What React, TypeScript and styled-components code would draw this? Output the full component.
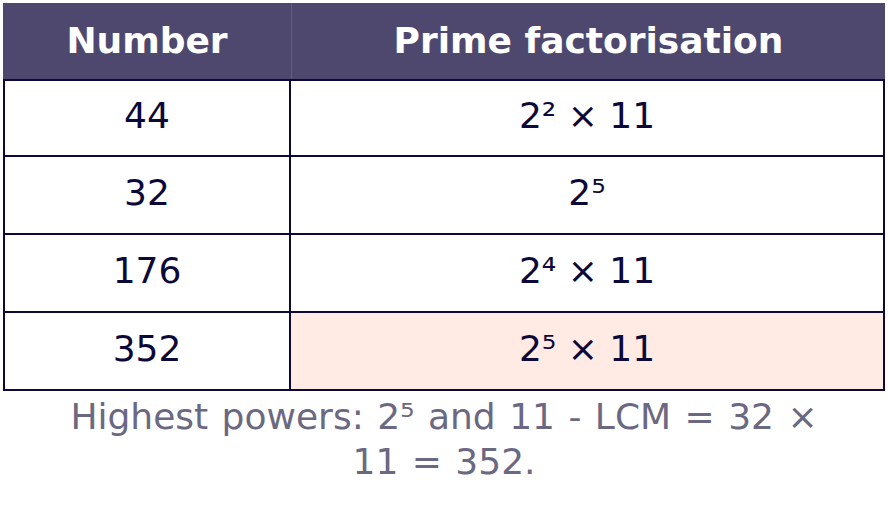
import { createGlobalStyle } from 'styled-components';
import styled from 'styled-components';

const rows = [
  { number: '44', factors: '2² × 11' },
  { number: '32', factors: '2⁵' },
  { number: '176', factors: '2⁴ × 11' },
  { number: '352', factors: '2⁵ × 11', highlight: true },
];

const GlobalStyle = createGlobalStyle`
  html, body {
    margin: 0;
    padding: 0;
    background: #ffffff;
  }
  body {
    font-family: 'DejaVu Sans', 'Liberation Sans', sans-serif;
  }
`;

const App = () => {
  return (
    <>
      <GlobalStyle />
      <Page>
        <Table>
          <thead>
            <tr>
              <HeadCell $first>Number</HeadCell>
              <HeadCell>Prime factorisation</HeadCell>
            </tr>
          </thead>
          <tbody>
            {rows.map((row, index) => (
              <tr key={row.number}>
                <Cell $first $top={index === 0}>
                  {row.number}
                </Cell>
                <Cell $top={index === 0} $highlight={row.highlight}>
                  {row.factors}
                </Cell>
              </tr>
            ))}
          </tbody>
        </Table>
        <Caption>Highest powers: 2⁵ and 11 - LCM = 32 × 11 = 352.</Caption>
      </Page>
    </>
  );
};

export default App;

const Page = styled.div`
  padding: 3px 3px 0;
  display: flex;
  flex-direction: column;
  align-items: stretch;
`;

const Table = styled.table`
  width: 100%;
  border-collapse: separate;
  border-spacing: 0;
  table-layout: fixed;
`;

const HeadCell = styled.th<{ $first?: boolean }>`
  width: ${(props) => (props.$first ? '288px' : 'auto')};
  height: 76px;
  padding: 0 0 2px;
  box-sizing: border-box;
  background: #4e486e;
  color: #ffffff;
  font-size: 36px;
  font-weight: bold;
  text-align: center;
  vertical-align: middle;
  border-left: ${(props) =>
    props.$first ? 'none' : '1px solid rgba(255, 255, 255, 0.12)'};
`;

const Cell = styled.td<{ $first?: boolean; $top?: boolean; $highlight?: boolean }>`
  height: 78px;
  padding: 0 0 5px;
  box-sizing: border-box;
  background: ${(props) => (props.$highlight ? '#ffebe4' : '#ffffff')};
  color: #0c0838;
  font-size: 36px;
  text-align: center;
  vertical-align: middle;
  border-bottom: 2px solid #0c0838;
  border-right: 2px solid #0c0838;
  border-left: ${(props) => (props.$first ? '2px solid #0c0838' : 'none')};
  border-top: ${(props) => (props.$top ? '2px solid #0c0838' : 'none')};
`;

const Caption = styled.p`
  margin: 3px 0 0;
  padding: 0 40px;
  font-size: 36px;
  line-height: 45px;
  word-spacing: 2px;
  color: #6b6882;
  text-align: center;
`;
